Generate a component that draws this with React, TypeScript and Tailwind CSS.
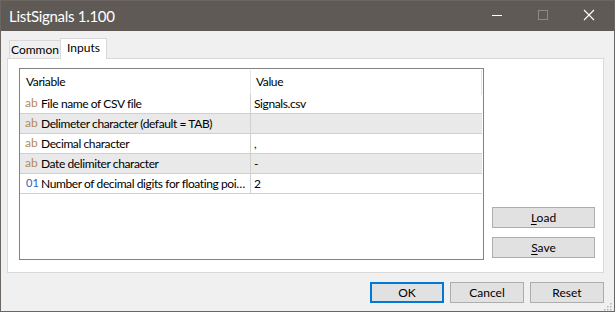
import React from "react";

type Row = { kind: "ab" | "01"; name: string; value: string; shade?: boolean };

const rows: Row[] = [
  { kind: "ab", name: "File name of CSV file", value: "Signals.csv" },
  { kind: "ab", name: "Delimeter character (default = TAB)", value: "", shade: true },
  { kind: "ab", name: "Decimal character", value: "," },
  { kind: "ab", name: "Date delimiter character", value: "-", shade: true },
  { kind: "01", name: "Number of decimal digits for floating poi…", value: "2" },
];

const font = { fontFamily: '"Segoe UI", Lato, "Liberation Sans", Arial, sans-serif' };

function Btn({ children, focused }: { children: React.ReactNode; focused?: boolean }) {
  return (
    <button
      className={
        focused
          ? "h-[21px] w-[74px] border-2 border-[#0078d7] bg-[#e1e1e1] text-[12px] text-black leading-none"
          : "h-[21px] w-[74px] border border-[#adadad] bg-[#e1e1e1] text-[12px] text-black leading-none"
      }
    >
      {children}
    </button>
  );
}

export default function App() {
  return (
    <div className="w-[615px] h-[312px] border border-[#6b6661] bg-[#f0f0f0] flex flex-col overflow-hidden" style={font}>
      {/* title bar */}
      <div className="h-[30px] bg-[#5f5a55] flex items-center shrink-0 relative">
        <span className="ml-[8px] text-[15px] text-white tracking-[-0.3px]">ListSignals 1.100</span>
        <div className="ml-auto flex items-center h-full">
          <svg width="46" height="30" viewBox="0 0 46 30">
            <line x1="18" y1="14.5" x2="28" y2="14.5" stroke="#ffffff" strokeWidth="1" />
          </svg>
          <svg width="46" height="30" viewBox="0 0 46 30">
            <rect x="18.5" y="9.5" width="9" height="9" fill="none" stroke="#8f8a85" strokeWidth="1" />
          </svg>
          <svg width="46" height="30" viewBox="0 0 46 30" className="mr-[2px]">
            <path d="M18 9 L28 19 M28 9 L18 19" stroke="#ffffff" strokeWidth="1.1" />
          </svg>
        </div>
      </div>

      {/* tabs */}
      <div className="flex items-end h-[20px] ml-[8px] mt-[7px] shrink-0">
        <div className="h-[18px] w-[52px] border border-b-0 border-[#d9d9d9] bg-[#f0f0f0] text-[12px] text-black flex items-center justify-center pt-[1px]">
          Common
        </div>
        <div className="h-[21px] w-[47px] -mb-px -ml-px border border-b-0 border-[#d9d9d9] bg-white text-[12px] text-black flex items-center justify-center pb-[2px] relative z-10">
          Inputs
        </div>
      </div>

      {/* panel */}
      <div className="ml-[6px] w-[597px] h-[215px] border border-[#d9d9d9] bg-white flex pt-[9px] pl-[11px] shrink-0">
        <div className="w-[465px] h-[192px] border border-[#828282] flex flex-col text-[12px] text-black tracking-[-0.4px]">
          <div className="h-[25px] flex shrink-0">
            <div className="w-[231px] flex items-center pl-[6px] pt-[1px] relative">
              Variable
              <div className="absolute right-0 top-[1px] bottom-0 w-px bg-[#e5e5e5]" />
            </div>
            <div className="flex-1 flex items-center pl-[5px] pt-[1px] relative">
              Value
              <div className="absolute right-[1px] top-[1px] bottom-[-1px] w-px bg-[#e5e5e5]" />
            </div>
          </div>
          {rows.map((r) => (
            <div
              key={r.name}
              className={
                r.shade
                  ? "h-[20px] flex border-b border-[#d0d0d0] bg-[#e9e9e9] mr-[1px]"
                  : "h-[20px] flex border-b border-[#d0d0d0] bg-white mr-[1px]"
              }
            >
              <div className="w-[231px] shrink-0 flex items-center border-r border-[#d0d0d0] pl-[5px] overflow-hidden whitespace-nowrap">
                <span
                  className={
                    r.kind === "ab"
                      ? "w-[16px] shrink-0 text-[12px] text-[#b38a55] -mt-[2px] tracking-normal"
                      : "w-[16px] shrink-0 text-[11px] text-[#2c64b4] pl-[1px] tracking-normal"
                  }
                >
                  {r.kind}
                </span>
                <span className="whitespace-nowrap">{r.name}</span>
              </div>
              <div className="flex-1 flex items-center pl-[3px]">{r.value}</div>
            </div>
          ))}
        </div>
        <div className="ml-[8px] w-[103px] flex flex-col gap-[9px] pt-[139px]">
          <button className="h-[21px] w-[103px] border border-[#adadad] bg-[#e1e1e1] text-[12px] text-black leading-none">
            <span className="underline underline-offset-2">L</span>oad
          </button>
          <button className="h-[21px] w-[103px] border border-[#adadad] bg-[#e1e1e1] text-[12px] text-black leading-none">
            <span className="underline underline-offset-2">S</span>ave
          </button>
        </div>
      </div>

      {/* bottom buttons */}
      <div className="flex items-end mt-[9px] pl-[369px] gap-[6px] relative">
        <Btn focused>OK</Btn>
        <Btn>Cancel</Btn>
        <Btn>Reset</Btn>
        <svg width="9" height="9" viewBox="0 0 9 9" className="absolute right-[2px] top-[20px]">
          {[
            [7, 1],
            [4, 4],
            [7, 4],
            [1, 7],
            [4, 7],
            [7, 7],
          ].map(([x, y]) => (
            <rect key={`${x}-${y}`} x={x} y={y} width="1.5" height="1.5" fill="#b5b5b5" />
          ))}
        </svg>
      </div>
    </div>
  );
}
